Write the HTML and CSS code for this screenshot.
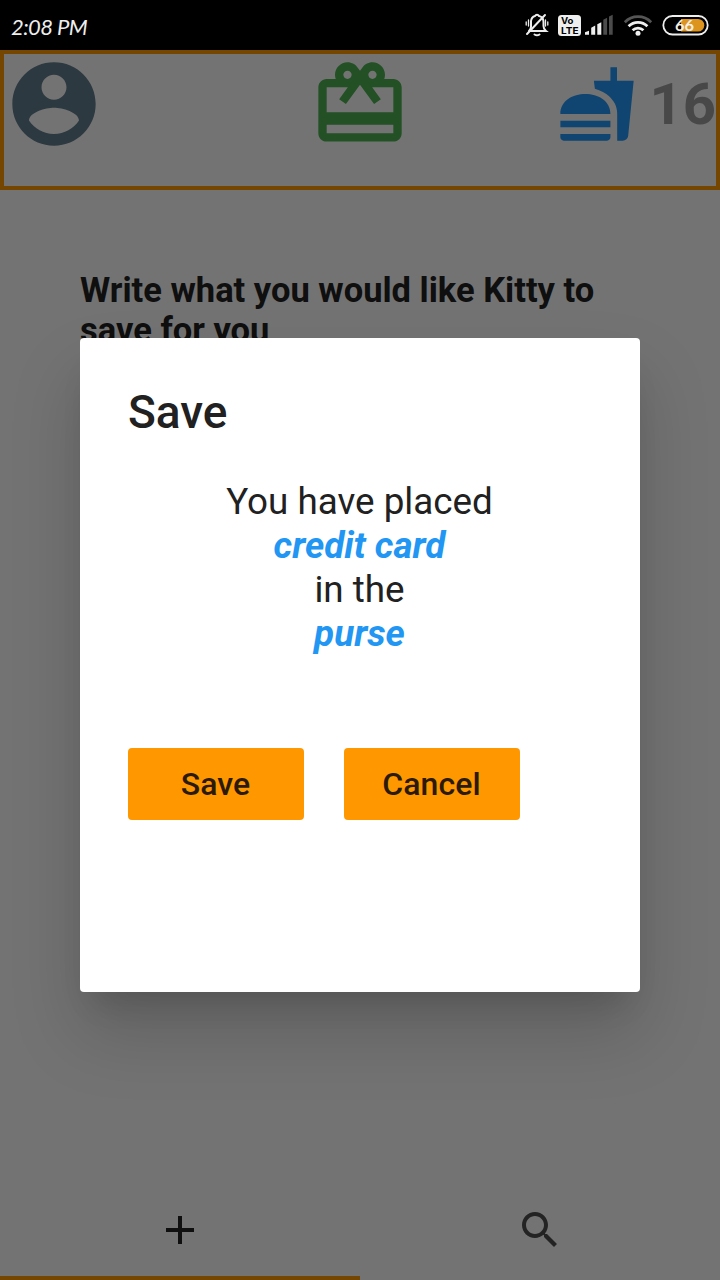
FILE: index.html
```html
<!DOCTYPE html>
<html lang="en">
<head>
<meta charset="utf-8">
<title>Kitty</title>
<link rel="stylesheet" href="styles.css">
</head>
<body>
<div class="screen">
  <div class="status">
    <span class="clock">2:08 PM</span>
    <svg class="status-icons" width="190" height="32" viewBox="524 10 190 32">
      <g fill="none" stroke="#eee" stroke-width="2" stroke-linecap="round">
        <path d="M530 31h16q-2.500-2-2.500-5v-4q0-5-4.500-6a2.300 2.300 0 0 0-4 0q-3.500 1-4 5v6q0 2-2 4"/>
        <path d="M534.500 34.500q2.500 1.500 5 0M527 34l18-19" />
        <path d="M528.500 20v6M526.200 22v3M545.500 20v6M547.800 22v3" stroke-width="1.300"/>
      </g>
      <rect x="558" y="15" width="23" height="21" rx="3.500" fill="#eee"/>
      <text class="volte" x="561" y="24" textLength="12.500" lengthAdjust="spacingAndGlyphs">Vo</text>
      <text class="volte" x="561" y="33.800" textLength="17.500" lengthAdjust="spacingAndGlyphs">LTE</text>
      <path fill="#eee" d="M585 34.800v-2.600l4-1.400v4zM591.200 34.800v-7l4-2.300v9.300zM597.300 34.800v-10.500l4-2v12.500z"/>
      <path fill="#4b4b4b" d="M603.300 34.800v-15l3.800-2v17zM609 34.800V16.500l3.700-1.800v20.100z"/>
      <g fill="none" stroke="#eee" stroke-width="2.700">
        <path stroke="#555" d="M624.800 22.200a18.500 18.500 0 0 1 26.400 0"/>
        <path d="M628.600 26.300a13.200 13.200 0 0 1 18.800 0M632.600 30.300a7.700 7.700 0 0 1 10.800 0"/>
      </g>
      <circle cx="638" cy="33.300" r="2.500" fill="#eee"/>
      <rect x="663.300" y="16" width="44.400" height="18.500" rx="9.250" fill="none" stroke="#eee" stroke-width="1.800"/>
      <path fill="#dc941e" d="M681 19h17a6.300 6.300 0 0 1 0 12.600h-17z"/>
      <text class="level" x="675" y="31.300" textLength="19" lengthAdjust="spacingAndGlyphs">66</text>
    </svg>
  </div>
  <div class="app">
    <header class="topbar">
      <svg class="profile" viewBox="0 0 24 24"><path d="M12 2C6.480 2 2 6.480 2 12s4.480 10 10 10 10-4.480 10-10S17.520 2 12 2zm0 3c1.660 0 3 1.340 3 3s-1.340 3-3 3-3-1.340-3-3 1.340-3 3-3zm0 14.200c-2.500 0-4.710-1.280-6-3.220.03-1.990 4-3.080 6-3.080 1.990 0 5.970 1.090 6 3.080-1.290 1.940-3.500 3.220-6 3.220z"/></svg>
      <svg class="gift" viewBox="0 0 24 24"><path d="M20 6h-2.180c.11-.31.18-.65.18-1 0-1.660-1.340-3-3-3-1.050 0-1.960.54-2.500 1.350l-.5.67-.5-.68C10.960 2.540 10.050 2 9 2 7.340 2 6 3.340 6 5c0 .35.07.69.18 1H4c-1.110 0-1.990.89-1.990 2L2 19c0 1.110.89 2 2 2h16c1.110 0 2-.89 2-2V8c0-1.110-.89-2-2-2zm-5-2c.55 0 1 .45 1 1s-.45 1-1 1-1-.45-1-1 .45-1 1-1zM9 4c.55 0 1 .45 1 1s-.45 1-1 1-1-.45-1-1 .45-1 1-1zm11 15H4v-2h16v2zm0-5H4V8h5.080L7 10.830 8.620 12 11 8.760l1-1.360 1 1.360L15.380 12 17 10.830 14.920 8H20v6z"/></svg>
      <div class="food">
        <svg class="meal" viewBox="0 0 24 24"><path d="M18.060 22.990h1.660c.84 0 1.530-.64 1.630-1.460L23 5.050h-5V1h-1.970v4.050h-4.970l.3 2.340c1.710.47 3.310 1.320 4.270 2.260 1.440 1.420 2.430 2.890 2.430 5.290v8.050zM1 21.990V21h15.030v.99c0 .55-.45 1-1.010 1H2.010c-.56 0-1.010-.45-1.010-1zm15.030-7c0-8-15.030-8-15.030 0h15.030zM1.020 17h15v2h-15z"/></svg>
        <span class="count">16</span>
      </div>
    </header>
    <main class="content"><h1 class="prompt">Write what you would like Kitty to<br>save for you</h1></main>
    <nav class="tabs">
      <div class="tab tab-active"><svg class="tab-icon" viewBox="0 0 24 24"><path d="M19 13h-6v6h-2v-6H5v-2h6V5h2v6h6v2z"/></svg></div>
      <div class="tab"><svg class="tab-icon tab-icon-idle" viewBox="0 0 24 24"><path d="M15.500 14h-.79l-.28-.27C15.410 12.590 16 11.110 16 9.500 16 5.910 13.090 3 9.500 3S3 5.910 3 9.500 5.910 16 9.500 16c1.610 0 3.090-.59 4.230-1.570l.27.28v.79l5 4.990L20.490 19l-4.990-5zm-6 0C7.010 14 5 11.990 5 9.500S7.010 5 9.500 5 14 7.010 14 9.500 11.990 14 9.500 14z"/></svg></div>
    </nav>
  </div>
  <div class="scrim">
    <section class="dialog">
      <h2 class="title">Save</h2>
      <div class="message">
        <span class="plain">You have placed</span>
        <span class="item">credit card</span>
        <span class="plain">in the</span>
        <span class="item">purse</span>
      </div>
      <div class="actions">
        <button class="btn">Save</button>
        <button class="btn">Cancel</button>
      </div>
    </section>
  </div>
</div>
</body>
</html>
```
FILE: styles.css
```css
* { box-sizing: border-box; }
body { margin: 0; font-family: Roboto, "Liberation Sans", sans-serif; }
svg { display: block; }
.screen { position: relative; width: 720px; height: 1280px; overflow: hidden; display: flex; flex-direction: column; background: #fafafa; }
.status { height: 50px; background: #000; display: flex; justify-content: space-between; padding: 10px 6px 0 11px; color: #eee; }
.clock { font: italic 400 22px/34px Lato, sans-serif; white-space: nowrap; letter-spacing: -0.6px; }
.volte { font: 700 9px Inter, sans-serif; fill: #000; }
.level { font: 700 16px Lato, sans-serif; fill: #f4efe5; }
.app { flex: 1; display: flex; flex-direction: column; }
.topbar { height: 140px; border: 4px solid #ff9800; display: flex; justify-content: space-between; align-items: flex-start; }
.profile { width: 100px; height: 100px; fill: #607d8b; }
.gift { width: 100px; height: 100px; fill: #4caf50; margin-left: 60px; }
.food { display: flex; align-items: center; height: 100px; }
.meal { width: 80px; height: 80px; fill: #2196f3; }
.count { font-size: 58px; line-height: 100px; font-weight: 700; color: #9e9e9e; margin-left: 12.500px; }
.content { flex: 1; padding: 80px; }
.prompt { margin: 0; font-size: 34.500px; line-height: 40px; font-weight: 700; color: #212121; white-space: nowrap; }
.tabs { height: 96px; display: flex; }
.tab { flex: 1; display: flex; justify-content: center; align-items: center; border-bottom: 4px solid transparent; }
.tab-active { border-color: #ff9800; }
.tab-icon { width: 48px; height: 48px; fill: #212121; }
.tab-icon-idle { fill: #4d4d4d; }
.scrim { position: absolute; left: 0; right: 0; top: 50px; bottom: 0; background: rgba(0, 0, 0, .54); display: flex; justify-content: center; align-items: center; }
.dialog { width: 560px; height: 654px; background: #fff; border-radius: 4px; padding: 48px; box-shadow: 0 22px 30px -14px rgba(0, 0, 0, .13), 0 40px 70px 0 rgba(0, 0, 0, .17); color: #212121; }
.title { margin: 0; font-size: 46px; line-height: 52px; font-weight: 500; }
.message { margin-top: 42px; display: flex; flex-direction: column; align-items: center; font-size: 36.800px; line-height: 44px; padding-right: 1px; }
.item { font-weight: 700; font-style: italic; color: #2196f3; }
.actions { margin-top: 92px; display: flex; gap: 40px; }
.btn { width: 176px; height: 72px; padding: 0 1px 0 0; border: 0; border-radius: 4px; background: #ff9800; color: #2b1a05; font: 500 32px/72px Roboto, sans-serif; letter-spacing: .1px; }
```
